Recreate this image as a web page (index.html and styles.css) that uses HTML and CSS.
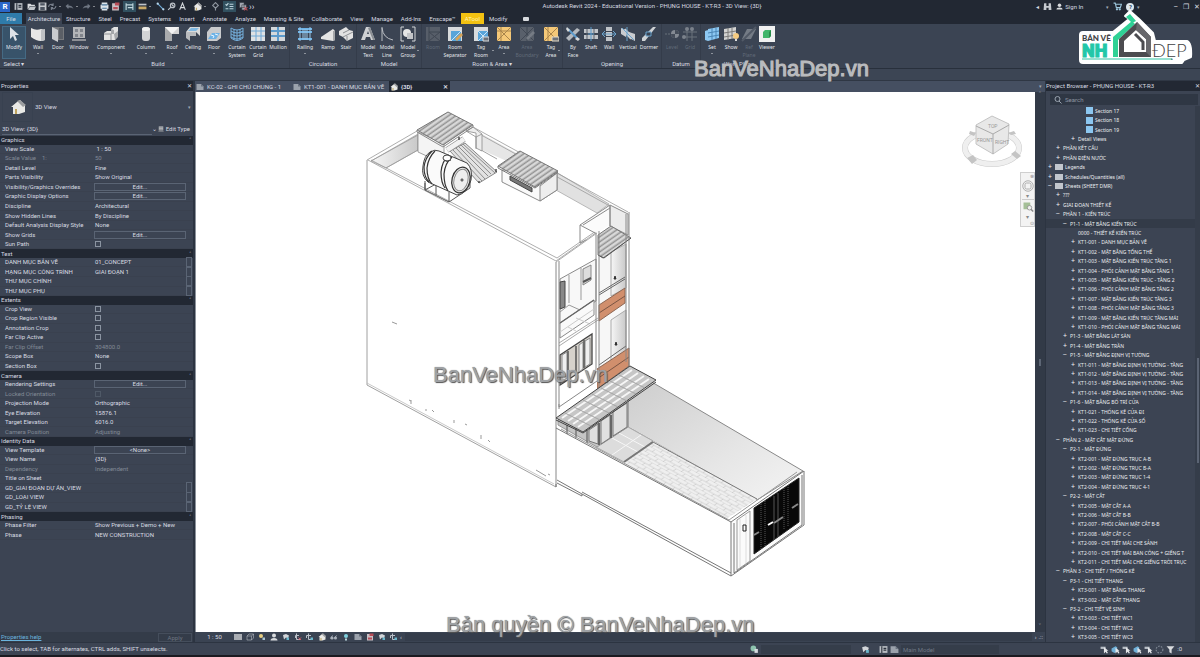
FILE: index.html
```html
<!DOCTYPE html>
<html lang="vi">
<head>
<meta charset="utf-8">
<title>Autodesk Revit 2024 - PHỤNG HOUSE</title>
<link rel="stylesheet" href="styles.css">
</head>
<body>
<svg class="defs" aria-hidden="true">
  <defs>
    <symbol id="arrow" viewBox="0 0 16 16"><path d="M4 1v12l3-3 2 5 2-1-2-5h4z" fill="#dde1e6"/></symbol>
    <symbol id="wall" viewBox="0 0 16 16"><path d="M1 2q5 3 10 1l4 1v10q-6 3-14-3z" fill="#e6e6e6"/><path d="M11 4l4-1v11l-4 1z" fill="#bfc1c4"/></symbol>
    <symbol id="door" viewBox="0 0 16 16"><path d="M2 1h12v13H8z" fill="#77797d"/><path d="M2 1l6 3v12l-6-3z" fill="#c9cbce"/><path d="M9 2h4v11H9z" fill="#5b5f66"/></symbol>
    <symbol id="window" viewBox="0 0 16 16"><path d="M2 1h12v11H2z" fill="#b3b5b8"/><path d="M4 3h3v3H4zM9 3h3v3H9zM4 8h3v3H4zM9 8h3v3H9z" fill="#80848b"/><path d="M1 13h14v2H1z" fill="#8d9096"/></symbol>
    <symbol id="component" viewBox="0 0 16 16"><path d="M1 7l3-2h4V3l3-2h4v9l-3 4H1z" fill="#e3e3e3"/><path d="M8 3v5h3V4zM11 8l4-3v6l-3 3z" fill="#a6a8ab"/><path d="M1 8h7v6" fill="none" stroke="#8f9296"/></symbol>
    <symbol id="column" viewBox="0 0 16 16"><rect x="4" y="1" width="8" height="14" rx="3" fill="#d2d3d5"/><ellipse cx="8" cy="3" rx="4" ry="2" fill="#f0f0f0"/></symbol>
    <symbol id="roof" viewBox="0 0 16 16"><path d="M1 1h14v7H8v7H1z" fill="#d4d4d4"/><path d="M1 1l7 7v7H1z" fill="#a9abad"/><path d="M1 1h14L8 8z" fill="#f3f3f3"/></symbol>
    <symbol id="ceiling" viewBox="0 0 16 16"><path d="M5 1h10v9l-4-4H1z" fill="#d9dadb"/><path d="M6 2h8l-3 3H3z" fill="#7fb8e2"/><path d="M1 6h10v4H5v5l-4-3z" fill="#b8babd"/></symbol>
    <symbol id="floor" viewBox="0 0 16 16"><path d="M5 1h10v11l-4 3H1V6z" fill="#c9cbcd"/><path d="M6 7h8l-4 6H2z" fill="#6fb3e6"/><path d="M5 9l3 1-1 2M9 8l3 1" stroke="#e9f5ff" fill="none"/></symbol>
    <symbol id="csystem" viewBox="0 0 16 16"><path d="M2 2q6 4 12 0v10q-6 5-12 0zM5 3v11M8 4v11M11 3v11M2 5q6 4 12 0M2 8q6 4 12 0M2 11q6 4 12 0" fill="none" stroke="#74aedb"/></symbol>
    <symbol id="cgrid" viewBox="0 0 16 16"><path d="M1 1h14v14H1z" fill="#dfe1e3"/><path d="M6 1v14M11 1v14M1 5h14M1 10h14" stroke="#6ea8d6"/></symbol>
    <symbol id="mullion" viewBox="0 0 16 16"><path d="M1 1h14v14H1z" fill="#d5d8db"/><path d="M8 1v14M1 5h14M1 10h14" stroke="#5c9acb" stroke-width="2"/></symbol>
    <symbol id="railing" viewBox="0 0 16 16"><path d="M1 3h14M1 6h14M1 13h14" stroke="#6db4e8" stroke-width="2"/><path d="M3 1v14M6 3v11M8 3v11M10 3v11M13 1v14" stroke="#9cc9ea"/></symbol>
    <symbol id="ramp" viewBox="0 0 16 16"><path d="M1 11L13 3l2 2v9l-2 1-12-2z" fill="#e4e4e4"/><path d="M13 5l2 0v9l-2 1z" fill="#a5a7aa"/></symbol>
    <symbol id="stair" viewBox="0 0 16 16"><path d="M1 5l7-4 3 3 4 1v7l-6 3-4-4-4-2z" fill="#e2e2e2"/><path d="M5 7l6-3M5 11l6-3 4-2M9 15v-5" stroke="#8c8f93" fill="none"/></symbol>
    <symbol id="mtext" viewBox="0 0 16 16"><path fill-rule="evenodd" d="M1 14L6 1h4l5 13h-4l-1-3H6l-1 3zM7 8h2L8 5z" fill="#cfd1d3"/><path d="M10 1l5 13h-2L8 2z" fill="#898d92"/></symbol>
    <symbol id="mline" viewBox="0 0 16 16"><path d="M3 1v14M3 2q1 10 11 12" fill="none" stroke="#b9bdc3"/></symbol>
    <symbol id="mgroup" viewBox="0 0 16 16"><path d="M4 1H1v14h3M12 1h3v14h-3" fill="none" stroke="#d3d5d8"/><circle cx="7" cy="7" r="4" fill="#e6e6e6"/><path d="M7 7h6v6H7z" fill="#c3c5c8"/></symbol>
    <symbol id="roomx" viewBox="0 0 16 16"><path d="M1 1h14v14H1z" fill="#575e69"/><path d="M4 1v14M4 6h11M4 15L15 6M4 6l11 9" stroke="#3f4652"/></symbol>
    <symbol id="roomsep" viewBox="0 0 16 16"><path d="M1 1h14v14H1z" fill="#d9dbdd"/><path d="M4 5h10v10H4z" fill="#58a4d9"/><path d="M4 15L14 5" stroke="#cde6f7"/><path d="M8 13l6-6 2 2-6 6z" fill="#d6a257"/></symbol>
    <symbol id="tagroom" viewBox="0 0 16 16"><path d="M1 1h14v14H1z" fill="#d9dbdd"/><path d="M5 5h10v10H5z" fill="#58a4d9"/><path d="M5 5l10 10M5 15L15 5" stroke="#cde6f7"/><path d="M10 11h6v4h-6z" fill="#6b7078" stroke="#ddd"/></symbol>
    <symbol id="area" viewBox="0 0 16 16"><path d="M1 1h14v14H1z" fill="#f4c878"/><path d="M1 1l14 14M1 15L15 1M5 1v14M1 5h14" stroke="#a9854c"/></symbol>
    <symbol id="areab" viewBox="0 0 16 16"><path d="M1 1h14v14H1z" fill="#59606b"/><path d="M1 1l14 14M1 15L15 1M8 1v14" stroke="#414854"/><path d="M7 12l7-7 2 2-7 7z" fill="#757b84"/></symbol>
    <symbol id="tagarea" viewBox="0 0 16 16"><path d="M1 1h14v14H1z" fill="#f4c878"/><path d="M1 1l14 14M1 15L15 1M5 1v14" stroke="#a9854c"/><path d="M9 11h7v4H9z" fill="#6b7078" stroke="#e6dcc8"/></symbol>
    <symbol id="byface" viewBox="0 0 16 16"><path d="M1 12L12 2l3 2L4 15z" fill="#b4b9bf"/><path d="M3 3l10 10" stroke="#5d9bcc" stroke-width="2"/><path d="M2 1l3 3-2 2-2-3zM12 11l3 2-2 2-3-2z" fill="#d8dadc"/></symbol>
    <symbol id="shaft" viewBox="0 0 16 16"><path d="M1 3h14v4H1zM1 9h14v4H1z" fill="#c0c4c9"/><path d="M4 3v10M11 3v10" stroke="#59616d"/><path d="M8 1v14M5 8h6" stroke="#5d9bcc"/></symbol>
    <symbol id="wallo" viewBox="0 0 16 16"><path d="M5 1h6v4H5zM5 11h6v4H5zM5 6h6v4H5z" fill="#c0c4c9"/><path d="M1 8h14M4 5L1 8l3 3M12 5l3 3-3 3" fill="none" stroke="#6ba3cd"/></symbol>
    <symbol id="vertical" viewBox="0 0 16 16"><path d="M1 2l5 2v7L1 8zM9 6l6 2v7l-6-3z" fill="#c9ccd0"/><path d="M4 4l8 8" stroke="#c9ccd0" stroke-width="4"/><path d="M2 2l12 12M7 1v14" stroke="#6ba3cd"/></symbol>
    <symbol id="dormer" viewBox="0 0 16 16"><path d="M1 12L12 1h3L4 15H1z" fill="#cfd2d5"/><path d="M5 6v4h5V6z" fill="#3b4453" stroke="#6ba3cd"/></symbol>
    <symbol id="level" viewBox="0 0 16 16"><path d="M1 8h8" stroke="#69707b" stroke-dasharray="2 1"/><circle cx="11" cy="8" r="4" fill="#848a93"/><path d="M11 4v4h4a4 4 0 0 0-4-4M11 8v4a4 4 0 0 1-4-4z" fill="#444c59"/></symbol>
    <symbol id="grid" viewBox="0 0 16 16"><path d="M5 3v12M10 3v12M1 6h14M1 11h14" stroke="#6b727d"/><circle cx="5" cy="3" r="2" fill="#7a818b"/><circle cx="10" cy="3" r="2" fill="#7a818b"/><circle cx="2" cy="11" r="2" fill="#7a818b"/></symbol>
    <symbol id="set" viewBox="0 0 16 16"><path d="M1 5l3-1v11l-3-1zM4 3l11-2v11L4 15z" fill="#8dc8f2"/><path d="M8 2v12M12 2v11M4 7l11-2M4 11l11-2" stroke="#4b86b5"/></symbol>
    <symbol id="show" viewBox="0 0 16 16"><path d="M1 3l12-2v11L1 14z" fill="#d3d3d1"/><path d="M5 2v12M9 2v11M1 7l12-2M1 11l12-2" stroke="#7b7a78"/><circle cx="13" cy="10" r="3" fill="#f5cb81"/><path d="M12 13h2v2h-2z" fill="#ddd"/></symbol>
    <symbol id="refplane" viewBox="0 0 16 16"><path d="M1 13L6 3h9l-5 10z" fill="#747b85"/><path d="M1 15L15 1" stroke="#515966" stroke-width="2"/></symbol>
    <symbol id="viewer" viewBox="0 0 16 16"><path d="M0 0h16v16H0z" fill="#f1f1f1"/><path d="M4 6l2-2h6v6l-2 2H4z" fill="#41b66b"/><path d="M10 6l2-2v6l-2 2z" fill="#2a8b4b"/></symbol>
    <symbol id="house" viewBox="0 0 16 16"><path d="M1 8l6-5 3-2 5 5v7l-6 2H3V8z" fill="#e9e9e6"/><path d="M7 2l3-1 6 5-3 2z" fill="#9b9d9f"/><path d="M5 10h2v5H5z" fill="#bfa35d"/></symbol>
    <symbol id="sheet" viewBox="0 0 16 16"><path d="M1 2h9l5 5v7H1z" fill="#9ba2ac"/><path d="M10 2v5h5" fill="#68717e"/></symbol>
    <symbol id="folder" viewBox="0 0 16 16"><path d="M1 3h5l2 2h6v2H5l-3 6H1z" fill="#d9dbde"/><path d="M5 8h11l-3 6H2z" fill="#c1c5ca"/></symbol>
    <symbol id="save" viewBox="0 0 16 16"><path d="M1 1h14v14H1z" fill="#c4c8cd"/><path d="M4 2h8v4H4zM4 9h8v5H4z" fill="#4c5461"/></symbol>
    <symbol id="doc" viewBox="0 0 16 16"><path d="M1 2h14v12H1z" fill="#b9bdc3"/><path d="M5 2v12M8 6h5M8 9h5" stroke="#2b323d" stroke-width="2"/></symbol>
    <symbol id="sync" viewBox="0 0 16 16"><path d="M1 9a5 5 0 0 1 8-4M14 7a5 5 0 0 1-8 4M9 2v4H6M6 14v-4h3" fill="none" stroke="#767e8a" stroke-width="2"/></symbol>
    <symbol id="undo" viewBox="0 0 16 16"><path d="M1 7l5-4v3q7 0 9 6-4-3-9-2v3z" fill="#6f7783"/></symbol>
    <symbol id="redo" viewBox="0 0 16 16"><path d="M15 7l-5-4v3q-7 0-9 6 4-3 9-2v3z" fill="#6f7783"/></symbol>
    <symbol id="print" viewBox="0 0 16 16"><path d="M3 1h10v4h2v7h-2v3H3v-3H1V5h2z" fill="#dce4ea"/><path d="M3 5h10M4 11h8" stroke="#48759b" stroke-width="2"/></symbol>
    <symbol id="pdf" viewBox="0 0 16 16"><path d="M2 2h9l3 3v10H2z" fill="#c8bfc4"/><path d="M7 1h8v5H7zM4 9h8v4H4z" fill="#b84d58"/></symbol>
    <symbol id="dim" viewBox="0 0 16 16"><path d="M2 2v12M14 2v12M2 5h12M5 10h8" stroke="#bfd6dd" stroke-width="2"/></symbol>
    <symbol id="ruler" viewBox="0 0 16 16"><path d="M1 3h14v3H1z" fill="#bfc3c8"/><path d="M1 8h14v5H1z" fill="#c9a868"/></symbol>
    <symbol id="dim2" viewBox="0 0 16 16"><path d="M3 3l10 10" stroke="#6eabd9" stroke-width="2"/><circle cx="3" cy="3" r="2" fill="#b9d8ee"/><circle cx="13" cy="13" r="2" fill="#b9d8ee"/></symbol>
    <symbol id="tag" viewBox="0 0 16 16"><circle cx="10" cy="6" r="4" fill="none" stroke="#bcc1c8" stroke-width="2"/><path d="M7 9l-5 5M8 4l4 4" stroke="#bcc1c8" stroke-width="2"/></symbol>
    <symbol id="letter" viewBox="0 0 16 16"><path d="M3 14L8 2l5 12M5 10h6" fill="none" stroke="#d6d9dd" stroke-width="2"/></symbol>
    <symbol id="circle" viewBox="0 0 16 16"><path d="M8 1l5 5-5 5-5-5zM8 11v4" fill="none" stroke="#8f96a0" stroke-width="2"/></symbol>
    <symbol id="ring" viewBox="0 0 16 16"><circle cx="8" cy="8" r="6" fill="none" stroke="#7d8692" stroke-width="2" stroke-dasharray="3 2"/></symbol>
    <symbol id="list" viewBox="0 0 16 16"><path d="M1 4l2 2 3-4M8 4h7M8 8h7M1 12h5M8 12h7" fill="none" stroke="#bcd2dc" stroke-width="2"/></symbol>
    <symbol id="closew" viewBox="0 0 16 16"><path d="M1 1h8v9H1zM5 5h8v9H5z" fill="#a9afb8" stroke="#2a303b"/><path d="M9 9l6 6M15 9l-6 6" stroke="#b34c55" stroke-width="2"/></symbol>
    <symbol id="person" viewBox="0 0 16 16"><circle cx="8" cy="5" r="4" fill="#d9dbde"/><path d="M1 15q0-5 7-5t7 5z" fill="#d9dbde"/></symbol>
    <symbol id="binoc" viewBox="0 0 16 16"><path d="M2 2h4v5h4V2h4l1 12h-5v-4H6v4H1z" fill="#c6cad0"/></symbol>
    <symbol id="cart" viewBox="0 0 16 16"><path d="M1 2h3l2 8h7l2-6H5" fill="none" stroke="#9cc6dc" stroke-width="2"/><circle cx="7" cy="13" r="2" fill="#9cc6dc"/><circle cx="12" cy="13" r="2" fill="#9cc6dc"/></symbol>
    <symbol id="cube" viewBox="0 0 16 16"><path d="M2 6l4-4h9v8l-4 4H2zM2 6h9v8M11 6l4-4" fill="none" stroke="#c8ccd2" stroke-width="1"/></symbol>
    <symbol id="vc" viewBox="0 0 16 16"><path d="M2 4l6-2 6 3-2 6-4-2-4 4z" fill="#d2d5d9"/><path d="M9 9h5v5H9z" fill="#69b7cc"/></symbol>
    <symbol id="vcx" viewBox="0 0 16 16"><path d="M3 10V5h7M5 1v12h8" fill="none" stroke="#bac0c8" stroke-width="2"/><path d="M9 9l5 5M14 9l-5 5" stroke="#cf5d68" stroke-width="2"/></symbol>
    <symbol id="vcrop" viewBox="0 0 16 16"><path d="M1 10V5h9M5 1v12h8" fill="none" stroke="#bac0c8" stroke-width="2"/><path d="M9 9h5v5H9z" fill="#69b7cc"/></symbol>
    <symbol id="glasses" viewBox="0 0 16 16"><path d="M1 11l4-6M8 11l5-6" stroke="#a9b0ba" stroke-width="2"/><circle cx="4" cy="10" r="3" fill="#a9b0ba"/><circle cx="11" cy="10" r="3" fill="#a9b0ba"/></symbol>
    <symbol id="sun" viewBox="0 0 16 16"><circle cx="6" cy="6" r="4" fill="#e8cf82"/><path d="M9 9h5v5H9z" fill="#aac5d2"/></symbol>
    <symbol id="pick" viewBox="0 0 16 16"><path d="M1 3h9v4H1z" fill="#b8bec6"/><path d="M7 4v11l3-3 2 3 2-1-2-4h3z" fill="#e5e7ea"/></symbol>
    <symbol id="pickb" viewBox="0 0 16 16"><path d="M1 6l7-4 3 2v7l-5 3-5-3z" fill="#6fb0d8"/><path d="M8 5v10l3-3 2 3 2-1-2-4h2z" fill="#e5e7ea"/></symbol>
    <symbol id="filter" viewBox="0 0 16 16"><path d="M1 2h14l-5 6v7l-4-2V8z" fill="#d9dbde"/></symbol>
    <symbol id="bulb" viewBox="0 0 16 16"><circle cx="8" cy="6" r="4" fill="#7fd0dd"/><path d="M6 11h4v4H6z" fill="#b9d5dc"/></symbol>
    <symbol id="sets" viewBox="0 0 16 16"><circle cx="6" cy="6" r="5" fill="#8ec3ae"/><path d="M8 7h6v7H8z" fill="#d6dadf"/></symbol>
    <symbol id="lens" viewBox="0 0 16 16"><circle cx="7" cy="6" r="5" fill="none" stroke="#9aa3af" stroke-width="2"/><path d="M10 10l5 5" stroke="#9aa3af" stroke-width="2"/></symbol>
  </defs>
</svg>

<div class="app">
  <header class="titlebar">
    <nav class="quick">
      <button class="rlogo" aria-label="Revit">R</button>
      <button aria-label="Home" class="q"><svg><use href="#doc"/></svg></button>
      <button aria-label="Open" class="q"><svg><use href="#folder"/></svg></button>
      <button aria-label="Save" class="q"><svg><use href="#save"/></svg></button>
      <button aria-label="Sync" class="q dd"><svg><use href="#sync"/></svg></button>
      <button aria-label="Undo" class="q dd"><svg><use href="#undo"/></svg></button>
      <button aria-label="Redo" class="q dd"><svg><use href="#redo"/></svg></button>
      <button aria-label="Print" class="q"><svg><use href="#print"/></svg></button>
      <button aria-label="Export" class="q"><svg><use href="#pdf"/></svg></button>
      <button aria-label="Thin lines" class="q on"><svg><use href="#dim"/></svg></button>
      <button aria-label="Measure" class="q dd"><svg><use href="#ruler"/></svg></button>
      <button aria-label="Dimension" class="q"><svg><use href="#dim2"/></svg></button>
      <button aria-label="Tag" class="q"><svg><use href="#tag"/></svg></button>
      <button aria-label="Text" class="q gap"><svg><use href="#letter"/></svg></button>
      <button aria-label="3D view" class="q dd"><svg><use href="#house"/></svg></button>
      <button aria-label="Section" class="q"><svg><use href="#circle"/></svg></button>
      <button aria-label="Line weights" class="q on"><svg><use href="#list"/></svg></button>
      <button aria-label="Close inactive" class="q"><svg><use href="#closew"/></svg></button>
      <button aria-label="More" class="more">››</button>
    </nav>
    <h1>Autodesk Revit 2024 - Educational Version - PHỤNG HOUSE - KT-R3 - 3D View: {3D}</h1>
    <div class="account">
      <span class="caret-l">◂</span>
      <button aria-label="Search" class="q"><svg><use href="#binoc"/></svg></button>
      <button class="signin"><svg><use href="#person"/></svg>Sign In</button>
      <span class="caret-d">▾</span>
      <button aria-label="Store" class="q"><svg><use href="#cart"/></svg></button>
      <button class="help" aria-label="Help">?</button>
      <span class="caret-d">▾</span>
      <div class="winbtns"><button aria-label="Minimize">–</button><button aria-label="Restore">❐</button><button aria-label="Close">✕</button></div>
    </div>
  </header>

  <nav class="tabs">
    <button class="file">File</button><button class="active">Architecture</button><button>Structure</button><button>Steel</button><button>Precast</button><button>Systems</button><button>Insert</button><button>Annotate</button><button>Analyze</button><button>Massing &amp; Site</button><button>Collaborate</button><button>View</button><button>Manage</button><button>Add-Ins</button><button>Enscape™</button><button class="atool">ATool</button><button>Modify</button><button class="rec" aria-label="Display"><i></i></button>
  </nav>

  <section class="ribbon">
    <div class="panel select"><div class="tools"><button class="tool w24 pressed"><svg><use href="#arrow"/></svg>Modify</button></div><p>Select ▾</p></div>
    <div class="panel"><div class="tools">
      <button class="tool w20 dn"><svg><use href="#wall"/></svg>Wall</button>
      <button class="tool w20"><svg><use href="#door"/></svg>Door</button>
      <button class="tool w22"><svg><use href="#window"/></svg>Window</button>
      <button class="tool w42 dn"><svg><use href="#component"/></svg>Component</button>
      <button class="tool w28 dn"><svg><use href="#column"/></svg>Column</button>
      <button class="tool w24 dn"><svg><use href="#roof"/></svg>Roof</button>
      <button class="tool w18"><svg><use href="#ceiling"/></svg>Ceiling</button>
      <button class="tool w24 dn"><svg><use href="#floor"/></svg>Floor</button>
      <button class="tool w22"><svg><use href="#csystem"/></svg>Curtain<br>System</button>
      <button class="tool w20"><svg><use href="#cgrid"/></svg>Curtain<br>Grid</button>
      <button class="tool w20"><svg><use href="#mullion"/></svg>Mullion</button>
    </div><p>Build</p></div>
    <div class="panel"><div class="tools">
      <button class="tool w28 dn"><svg><use href="#railing"/></svg>Railing</button>
      <button class="tool w18"><svg><use href="#ramp"/></svg>Ramp</button>
      <button class="tool w18"><svg><use href="#stair"/></svg>Stair</button>
    </div><p>Circulation</p></div>
    <div class="panel"><div class="tools">
      <button class="tool w20"><svg><use href="#mtext"/></svg>Model<br>Text</button>
      <button class="tool w18"><svg><use href="#mline"/></svg>Model<br>Line</button>
      <button class="tool w24 side"><svg><use href="#mgroup"/></svg>Model<br>Group</button>
    </div><p>Model</p></div>
    <div class="panel"><div class="tools">
      <button class="tool w20" disabled><svg><use href="#roomx"/></svg>Room</button>
      <button class="tool w24"><svg><use href="#roomsep"/></svg>Room<br>Separator</button>
      <button class="tool w28 side"><svg><use href="#tagroom"/></svg>Tag<br>Room</button>
      <button class="tool w18 dn"><svg><use href="#area"/></svg>Area</button>
      <button class="tool w28" disabled><svg><use href="#areab"/></svg>Area<br>Boundary</button>
      <button class="tool w20 side"><svg><use href="#tagarea"/></svg>Tag<br>Area</button>
    </div><p>Room &amp; Area ▾</p></div>
    <div class="panel"><div class="tools">
      <button class="tool w18"><svg><use href="#byface"/></svg>By<br>Face</button>
      <button class="tool w18"><svg><use href="#shaft"/></svg>Shaft</button>
      <button class="tool w18"><svg><use href="#wallo"/></svg>Wall</button>
      <button class="tool w20"><svg><use href="#vertical"/></svg>Vertical</button>
      <button class="tool w22"><svg><use href="#dormer"/></svg>Dormer</button>
    </div><p>Opening</p></div>
    <div class="panel"><div class="tools">
      <button class="tool w18" disabled><svg><use href="#level"/></svg>Level</button>
      <button class="tool w18" disabled><svg><use href="#grid"/></svg>Grid</button>
    </div><p>Datum</p></div>
    <div class="panel last"><div class="tools">
      <button class="tool w20 dn"><svg><use href="#set"/></svg>Set</button>
      <button class="tool w18"><svg><use href="#show"/></svg>Show</button>
      <button class="tool w18" disabled><svg><use href="#refplane"/></svg>Ref<br>Plane</button>
      <button class="tool w18"><svg><use href="#viewer"/></svg>Viewer</button>
    </div><p>Work Plane</p></div>
  </section>
  <div class="optionsbar"></div>

  <main class="work">
    <aside class="props">
      <div class="ptitle"><h2>Properties</h2><button aria-label="Close properties">✕</button></div>
      <div class="ptype"><span class="thumb"><svg><use href="#house"/></svg></span><span class="tname">3D View</span><span class="caret-d">▾</span></div>
      <div class="pinst">
        <select aria-label="Instance"><option>3D View: {3D}</option></select><span class="chev">⌄</span>
        <button><svg><use href="#window"/></svg>Edit Type</button>
      </div>
      <table class="plist"><tbody>
        <tr class="sec"><th colspan="2">Graphics</th></tr>
        <tr><th>View Scale</th><td>&nbsp;1 : 50</td></tr>
        <tr class="off"><th>Scale Value &nbsp;&nbsp; 1:</th><td>50</td></tr>
        <tr><th>Detail Level</th><td>Fine</td></tr>
        <tr><th>Parts Visibility</th><td>Show Original</td></tr>
        <tr><th>Visibility/Graphics Overrides</th><td><button>Edit...</button></td></tr>
        <tr><th>Graphic Display Options</th><td><button>Edit...</button></td></tr>
        <tr><th>Discipline</th><td>Architectural</td></tr>
        <tr><th>Show Hidden Lines</th><td>By Discipline</td></tr>
        <tr><th>Default Analysis Display Style</th><td>None</td></tr>
        <tr><th>Show Grids</th><td><button>Edit...</button></td></tr>
        <tr><th><label for="c1">Sun Path</label></th><td><input id="c1" type="checkbox"></td></tr>
        <tr class="sec"><th colspan="2">Text</th></tr>
        <tr class="pk"><th>DANH MỤC BẢN VẼ</th><td>01_CONCEPT</td></tr>
        <tr class="pk"><th>HẠNG MỤC CÔNG TRÌNH</th><td>GIAI ĐOẠN 1</td></tr>
        <tr class="pk"><th>THƯ MỤC CHÍNH</th><td></td></tr>
        <tr class="pk"><th>THƯ MỤC PHỤ</th><td></td></tr>
        <tr class="sec"><th colspan="2">Extents</th></tr>
        <tr><th><label for="c2">Crop View</label></th><td><input id="c2" type="checkbox"></td></tr>
        <tr><th><label for="c3">Crop Region Visible</label></th><td><input id="c3" type="checkbox"></td></tr>
        <tr><th><label for="c4">Annotation Crop</label></th><td><input id="c4" type="checkbox"></td></tr>
        <tr><th><label for="c5">Far Clip Active</label></th><td><input id="c5" type="checkbox"></td></tr>
        <tr class="off"><th>Far Clip Offset</th><td>304800.0</td></tr>
        <tr><th>Scope Box</th><td>None</td></tr>
        <tr><th><label for="c6">Section Box</label></th><td><input id="c6" type="checkbox"></td></tr>
        <tr class="sec"><th colspan="2">Camera</th></tr>
        <tr><th>Rendering Settings</th><td><button>Edit...</button></td></tr>
        <tr class="off"><th><label for="c7">Locked Orientation</label></th><td><input id="c7" type="checkbox" disabled></td></tr>
        <tr><th>Projection Mode</th><td>Orthographic</td></tr>
        <tr><th>Eye Elevation</th><td>15876.1</td></tr>
        <tr><th>Target Elevation</th><td>6016.0</td></tr>
        <tr class="off"><th>Camera Position</th><td>Adjusting</td></tr>
        <tr class="sec"><th colspan="2">Identity Data</th></tr>
        <tr><th>View Template</th><td><button>&lt;None&gt;</button></td></tr>
        <tr><th>View Name</th><td>{3D}</td></tr>
        <tr class="off"><th>Dependency</th><td>Independent</td></tr>
        <tr><th>Title on Sheet</th><td></td></tr>
        <tr class="pk"><th>GD_GIAI ĐOẠN DỰ ÁN_VIEW</th><td></td></tr>
        <tr class="pk"><th>GD_LOẠI VIEW</th><td></td></tr>
        <tr class="pk"><th>GD_TỶ LỆ VIEW</th><td></td></tr>
        <tr class="sec"><th colspan="2">Phasing</th></tr>
        <tr><th>Phase Filter</th><td>Show Previous + Demo + New</td></tr>
        <tr><th>Phase</th><td>NEW CONSTRUCTION</td></tr>
      </tbody></table>
      <div class="pspace"></div>
      <div class="pfoot"><a href="#help">Properties help</a><button disabled>Apply</button></div>
    </aside>

    <section class="center">
      <nav class="doctabs">
        <button><svg><use href="#sheet"/></svg>KC-02 - GHI CHÚ CHUNG - 1</button>
        <button><svg><use href="#sheet"/></svg>KT1-001 - DANH MỤC BẢN VẼ</button>
        <button class="active"><svg><use href="#house"/></svg>{3D}<span>✕</span></button>
        <span class="caret-d">▾</span>
      </nav>
      <div class="viewrow">
        <div class="canvas">
          <svg class="model" viewBox="196 92 839 540" fill="none" stroke="#8a8a8a" stroke-width="1">
            <defs>
              <pattern id="tiles" width="9" height="6" patternUnits="userSpaceOnUse" patternTransform="matrix(1 .56 1 -.7 628 427)"><path d="M0 0h9M0 3h9M2 0v3M6 3v3" stroke="#c2c2c2" stroke-width=".5"/></pattern>
              <pattern id="ribs" width="4" height="3" patternUnits="userSpaceOnUse" patternTransform="matrix(1 .56 1 -.7 0 0)"><path d="M0 0h4v3H0z" fill="#c6c6c6" stroke="none"/><path d="M1 0v3" stroke="#777" stroke-width=".7"/><path d="M3 0v3" stroke="#e2e2e2" stroke-width="1"/></pattern>
              <linearGradient id="yard" x1="0" y1="0" x2="1" y2="1"><stop offset="0" stop-color="#cdcdcd"/><stop offset=".6" stop-color="#e6e6e6"/><stop offset="1" stop-color="#f4f4f4"/></linearGradient>
              <linearGradient id="shade" x1="0" y1="0" x2="1" y2="0"><stop offset="0" stop-color="#f6f6f6"/><stop offset="1" stop-color="#c9c9c9"/></linearGradient>
            </defs>
            <!-- parapet and roof deck -->
            <g stroke-width=".8">
              <path d="M371 161l47-27v16l-32 18z" fill="url(#shade)" stroke="#aaa"/>
              <path d="M482 134l38 21v12l-38-17z" fill="#e6e6e6" stroke="none"/>
              <path d="M556 172l53 32-12 9-41-23z" fill="#e1e1e1" stroke="#aaa"/>
              <path d="M481 150l16 9M481 134v17"/>
              <path d="M367 160l50-29M371 161l47-26M473 127l155 85M474 131l152 84M418 132v18l19 10M386 168l32-18M368 160l188 101 41-29M371 160l186 98 39-27" stroke="#999"/>
              <path d="M367 160v225l189 102" stroke="#888"/><path d="M367 383l187 101" stroke="#bbb"/>
              <path d="M418 132v20l26 12V144z" fill="#f4f4f4"/>
              <path d="M466 131l7-4 9 7v17l-6-3v-15z" fill="#ededed"/><path d="M466 131l10 6 6-3M476 137v12"/>
            </g>
            <path d="M417 130l31-18 25 13-30 20z" fill="url(#ribs)" stroke="#777"/><path d="M417 130v2l26 15 30-20v-2" stroke="#888"/>
            <!-- solar heater -->
            <path d="M450 151l15-8 32 29-18 11z" fill="#e2e2e2" stroke="#888"/><path d="M453 150l29 31M456 148l29 31M459 147l29 29M461 145l30 29M463 144l32 29" stroke="#777" stroke-width=".8"/><path d="M447 150l17-11" stroke="#888" stroke-width="6"/><path d="M447 150l17-11" stroke="#f2f2f2" stroke-width="5"/><path d="M479 183v-2M496 172v-3M459 137v3" stroke="#444" stroke-width="1.4"/>
            <!-- water tank -->
            <path d="M425 181v9l11-6v-4M436 185v10M449 192v10l21-14v-6M425 190l24 12M425 190v-7" stroke="#555"/>
            <path d="M430 152q5-3 9-1l28 12q6 6 4 17-4 14-14 15l-29-13q-7-6-5-16 1-10 7-14z" fill="#fafafa" stroke="#444"/>
            <path d="M432 151q-7 7-8 16 0 10 5 15M435 151q-7 7-8 17 0 11 5 16M449 155q-7 6-8 17 0 11 4 16M452 157q-7 6-8 17 0 11 4 17" stroke="#333" stroke-width="1.2"/>
            <ellipse cx="461" cy="180" rx="9" ry="13" transform="rotate(14 461 180)" fill="#eee" stroke="#333" stroke-width="1.3"/><ellipse cx="461" cy="180" rx="7" ry="11" transform="rotate(14 461 180)" stroke="#888"/><circle cx="462" cy="180" r="1.2" fill="#222"/>
            <ellipse cx="447" cy="158" rx="4" ry="3" fill="#fff" stroke="#444"/><path d="M444 160q3 3 7 0" stroke="#444"/>
            <!-- skylight box -->
            <path d="M502 170v12l38 19 17-11v-18z" fill="#fafafa"/><path d="M540 186v15l17-11v-17z" fill="#eee"/><path d="M510 176l22 12v4l-22-12z" fill="#777" stroke="#444"/>
            <path d="M498 166l22-15 38 20-23 16z" fill="url(#ribs)" stroke="#777"/><path d="M498 166v2l37 20 23-16" stroke="#777"/>
            <!-- stair head -->
            <path d="M580 225l30-20v20l-13 8z" fill="#fbfbfb" stroke="none"/><path d="M610 205l18 9v21l-18-9z" fill="#ececec"/>
            <path d="M580 225l30-20M580 225l17 9M580 225v18l6-3M583 225l27-17M610 206v20"/>
            <!-- right bay -->
            <path d="M599 248l27-12v130l-27 25z" fill="#f7f7f7" stroke="none"/>
            <path d="M611 252l15-8v44l-15 8zM611 320l15-10v46l-15 8z" fill="url(#shade)" stroke="#aaa"/>
            <path d="M598 235l13-9 20 12-28 20-5-3z" fill="url(#ribs)" stroke="#777"/><path d="M598 255l6 3 27-20" stroke="#555"/>
            <path d="M599 293l26-16M599 295l26-16M599 365l27-19" stroke="#666"/>
            <path d="M599 305l26-17v15l-26 18zM597 369l32-21v18l-32 23z" fill="#d18f6d" stroke="#8e6753"/><path d="M599 313l26-17M597 379l32-22" stroke="#7a5544"/>
            <path d="M614 279l1-3 1 3zM615 345l1-3 1 3z" fill="#111" stroke="#333"/>
            <!-- front facade -->
            <path d="M556 262l41-29v158l-41 28z" fill="#fff" stroke="none"/>
            <path d="M560 279l36-20v42l-36 23z" fill="#f8f8f8"/><path d="M560 282l5-1v26l-5 2z" fill="#888" stroke="#444"/><path d="M569 275v28M581 268v32M560 312l9-7 11 5" stroke="#999"/><path d="M583 269l8-4v15l-8 5z" fill="#ddd" stroke="#888"/><path d="M583 282l8-4" stroke="#555" stroke-width="2"/>
            <path d="M560 323l34-23v15l-34 23z" fill="#fafafa"/><path d="M560 323l34-23" stroke="#666" stroke-width="1.4"/><path d="M560 332l34-23M568 327l8 4M576 318l14 6" stroke="#ccc"/><path d="M559 343l39-25M559 346l39-26" stroke="#aaa"/>
            <path d="M560 355l32-21v30l-32 21z" fill="#d6d2cb" stroke="#444" stroke-width="1.3"/><path d="M562 355l5-3v26l-5 3zM579 345l4-3v27l-4 3zM585 341l5-3v26l-5 3z" fill="#efefef" stroke="#888"/><path d="M568 351v29M576 346v29M584 340v28" stroke="#555" stroke-width="1.5"/>
            <path d="M559 407l38-26M559 404v3" stroke="#888"/>
            <path d="M556 262v225M559 261v148M596 233v137M599 231v158M626 214v148M629 212v154" stroke="#888"/><path d="M556 262l41-29" stroke="#aaa"/>
            <!-- yard -->
            <path d="M628 385l22-4 153 90-46 29-129-73z" fill="url(#yard)" stroke="#888"/>
            <path d="M628 427l129 72-31 20-165-91z" fill="#efefef" stroke="none"/>
            <path d="M628 427l129 72-31 20-101-57z" fill="url(#tiles)" stroke="none"/>
            <path d="M628 427l25 14-29 21-28-15z" fill="#dcdcdc" stroke="#aaa"/><path d="M612 438l26 14M619 433l26 14M641 435l-29 20" stroke="#f6f6f6"/><path d="M653 442l-29 20" stroke="#777" stroke-width="2"/><path d="M653 442l104 57" stroke="#777"/>
            <path d="M558 420l70-45v52l-31 20-39-22z" fill="#c5c5c5" stroke="#999"/>
            <path d="M589 430l9-6v20l-9-3zM601 421l9-6v23l-9 6zM613 412l14-9v24l-14 9z" fill="#e0e0e0" stroke="#777"/><path d="M599 423v22M611 415v23" stroke="#666" stroke-width="2"/><path d="M567 425v9M576 428v10M587 430v13" stroke="#777" stroke-width="1.5"/>
            <path d="M556 418l74-52 26 14-73 52z" fill="#c6c6c6" stroke="#444"/>
            <path d="M562 418l70-48M568 421l70-48M573 424l71-48M578 427l71-48" stroke="#f6f6f6" stroke-width="2"/><path d="M565 413l26 13M574 407l26 13M583 400l26 13M592 394l26 13M601 388l26 13M610 381l26 13M619 375l26 13" stroke="#a5a5a5"/><path d="M556 420l27 13 73-51" stroke="#444"/>
            <path d="M557 430l174 93v53L557 484z" fill="#fff" stroke="none"/><path d="M731 523l72-50v52l-72 51z" fill="#fbfbfb" stroke="none"/>
            <path d="M561 429l168 91 68-48" stroke="#999"/>
            <path d="M556 428l175 94 73-51M731 522v54l73-51v-54M734 523v50l68-48v-50M556 487v-3M557 480l25 14M557 483l25 13v-2l149 82M582 492l149 81" stroke="#777"/>
            <path d="M737 520l13-9v50l-13 9z" stroke="#999"/><path d="M740 519v48M746 515v48" stroke="#ddd"/><path d="M743 525h3v6h-3z" stroke="#222"/>
            <path d="M754 508l45-30v44l-45 32z" fill="#080808" stroke="#222"/>
            <path d="M761 504v45M765 501v45M784 488v42M788 485v42" stroke="#555" stroke-dasharray="1 1"/><path d="M774 496v44M778 493v44" stroke="#555"/><path d="M754 535l5-3M774 523l9-6M792 508l6-4" stroke="#888" stroke-width="2"/><path d="M768 525l5-3" stroke="#fff" stroke-width="2"/>
            <!-- stray marks on the side wall -->
            <path d="M392 322l5 2M409 400l2 1M411 400v4M426 409v2M432 410l2 2M454 420v3M465 424l2 1M481 435v4M488 440l2 2M536 470l10 6M548 474l2 1" stroke="#999"/>
            <!-- view cube -->
            <g stroke="#c4c4c4">
              <ellipse cx="992" cy="148" rx="27" ry="16" stroke="#ccc" stroke-width="6"/><ellipse cx="992" cy="148" rx="27" ry="16" stroke="#efefef" stroke-width="5"/>
              <path d="M967 158l6-3 4 5-5 4zM1011 154l6 5 4-3-6-5zM970 131l6 2-2 3-5-2zM1008 133l6-2 2 3-5 1z" fill="#c4c4c4" stroke="none"/>
              <path d="M976 125l16-9 17 8-1 20-15 10-17-10z" fill="#e8e8e8"/><path d="M976 126l17 8 16-9M993 134v20" stroke="#aaa"/>
            </g>
            <g class="cubetext" stroke="none"><text x="988" y="128">TOP</text><text x="977" y="142">FRONT</text><text x="995" y="144">RIGHT</text></g>
          </svg>
          <div class="navbar">
            <button class="tiny" aria-label="Close">⊗</button>
            <button aria-label="Steering wheel"><svg viewBox="0 0 16 16"><circle cx="8" cy="8" r="7" fill="none" stroke="#999"/><rect x="4" y="4" width="8" height="8" rx="2" fill="none" stroke="#999"/></svg></button>
            <span>▾</span>
            <button class="zoom" aria-label="Zoom"><svg viewBox="0 0 16 16"><path d="M2 2h9v9H2z" fill="#a4bf97"/><circle cx="10" cy="9" r="3" fill="#eee" stroke="#888"/><path d="M12 11l3 3" stroke="#888" stroke-width="2"/></svg></button>
            <span>▾</span>
            <button class="tiny end" aria-label="Options">⊙</button>
          </div>
        </div>
        <div class="vscroll"><span>˄</span><i></i><span>˅</span></div>
      </div>
      <div class="viewbar">
        <button class="scale">1 : 50</button>
        <button aria-label="Detail"><i class="blk"></i></button>
        <button aria-label="Style"><svg><use href="#cube"/></svg></button>
        <button aria-label="Sun"><svg><use href="#sun"/></svg></button>
        <button aria-label="Shadows"><svg><use href="#person"/></svg></button>
        <button aria-label="Render"><svg><use href="#vc"/></svg></button>
        <button aria-label="Crop off"><svg><use href="#vcx"/></svg></button>
        <button aria-label="Crop"><svg><use href="#vcrop"/></svg></button>
        <button aria-label="Lock"><svg><use href="#house"/></svg></button>
        <button aria-label="Glasses"><svg><use href="#glasses"/></svg></button>
        <button aria-label="Reveal"><svg><use href="#bulb"/></svg></button>
        <button aria-label="Template"><svg><use href="#sheet"/></svg></button>
        <button aria-label="Analytical"><svg><use href="#pdf"/></svg></button>
        <button aria-label="Highlight"><svg><use href="#vc"/></svg></button>
        <button aria-label="Constraints"><svg><use href="#vcrop"/></svg></button>
        <span>‹</span>
        <div class="hscroll"></div><span>›</span><span class="grip">.::</span>
      </div>
    </section>

    <aside class="browser">
      <div class="ptitle"><h2>Project Browser - PHỤNG HOUSE - KT-R3</h2><button aria-label="Close browser">✕</button></div>
      <label class="search"><svg><use href="#lens"/></svg><input type="text" placeholder="Search" aria-label="Search"></label>
      <div class="treewrap">
      <ul class="tree">
        <li class="l5"><i class="ic blue"></i>Section 17</li>
        <li class="l5"><i class="ic blue"></i>Section 18</li>
        <li class="l5"><i class="ic blue"></i>Section 19</li>
        <li class="l4"><button>+</button>Detail Views</li>
        <li class="l2"><button>+</button>PHẦN KẾT CẤU</li>
        <li class="l2"><button>+</button>PHẦN ĐIỆN NƯỚC</li>
        <li class="l1"><button>+</button><i class="ic"></i>Legends</li>
        <li class="l1"><button>+</button><i class="ic"></i>Schedules/Quantities (all)</li>
        <li class="l1"><button>−</button><i class="ic"></i>Sheets (SHEET DMR)</li>
        <li class="l2"><button>+</button>???</li>
        <li class="l2"><button>+</button>GIAI ĐOẠN THIẾT KẾ</li>
        <li class="l2"><button>−</button>PHẦN 1 - KIẾN TRÚC</li>
        <li class="l3 sel"><button>−</button>P1-1 - MẶT BẰNG KIẾN TRÚC</li>
        <li class="l4 leaf">0000 - THIẾT KẾ KIẾN TRÚC</li>
        <li class="l4"><button>+</button>KT1-001 - DANH MỤC BẢN VẼ</li>
        <li class="l4"><button>+</button>KT1-002 - MẶT BẰNG TỔNG THỂ</li>
        <li class="l4"><button>+</button>KT1-003 - MẶT BẰNG KIẾN TRÚC TẦNG 1</li>
        <li class="l4"><button>+</button>KT1-004 - PHỐI CẢNH MẶT BẰNG TẦNG 1</li>
        <li class="l4"><button>+</button>KT1-005 - MẶT BẰNG KIẾN TRÚC - TẦNG 2</li>
        <li class="l4"><button>+</button>KT1-006 - PHỐI CẢNH MẶT BẰNG TẦNG 2</li>
        <li class="l4"><button>+</button>KT1-007 - MẶT BẰNG KIẾN TRÚC TẦNG 3</li>
        <li class="l4"><button>+</button>KT1-008 - PHỐI CẢNH MẶT BẰNG TẦNG 3</li>
        <li class="l4"><button>+</button>KT1-009 - MẶT BẰNG KIẾN TRÚC TẦNG MÁI</li>
        <li class="l4"><button>+</button>KT1-010 - PHỐI CẢNH MẶT BẰNG TẦNG MÁI</li>
        <li class="l3"><button>+</button>P1-3 - MẶT BẰNG LÁT SÀN</li>
        <li class="l3"><button>+</button>P1-4 - MẶT BẰNG TRẦN</li>
        <li class="l3"><button>−</button>P1-5 - MẶT BẰNG ĐỊNH VỊ TƯỜNG</li>
        <li class="l4"><button>+</button>KT1-011 - MẶT BẰNG ĐỊNH VỊ TƯỜNG - TẦNG</li>
        <li class="l4"><button>+</button>KT1-012 - MẶT BẰNG ĐỊNH VỊ TƯỜNG - TẦNG</li>
        <li class="l4"><button>+</button>KT1-013 - MẶT BẰNG ĐỊNH VỊ TƯỜNG - TẦNG</li>
        <li class="l4"><button>+</button>KT1-014 - MẶT BẰNG ĐỊNH VỊ TƯỜNG - TẦNG</li>
        <li class="l3"><button>−</button>P1-6 - MẶT BẰNG BỐ TRÍ CỬA</li>
        <li class="l4"><button>+</button>KT1-021 - THỐNG KÊ CỬA ĐI</li>
        <li class="l4"><button>+</button>KT1-022 - THỐNG KÊ CỬA SỔ</li>
        <li class="l4"><button>+</button>KT1-023 - CHI TIẾT CỔNG</li>
        <li class="l2"><button>−</button>PHẦN 2 - MẶT CẮT MẶT ĐỨNG</li>
        <li class="l3"><button>−</button>P2-1 - MẶT ĐỨNG</li>
        <li class="l4"><button>+</button>KT2-001 - MẶT ĐỨNG TRỤC A-B</li>
        <li class="l4"><button>+</button>KT2-002 - MẶT ĐỨNG TRỤC B-A</li>
        <li class="l4"><button>+</button>KT2-003 - MẶT ĐỨNG TRỤC 1-4</li>
        <li class="l4"><button>+</button>KT2-004 - MẶT ĐỨNG TRỤC 4-1</li>
        <li class="l3"><button>−</button>P2-2 - MẶT CẮT</li>
        <li class="l4"><button>+</button>KT2-005 - MẶT CẮT A-A</li>
        <li class="l4"><button>+</button>KT2-006 - MẶT CẮT B-B</li>
        <li class="l4"><button>+</button>KT2-007 - PHỐI CẢNH MẶT CẮT B-B</li>
        <li class="l4"><button>+</button>KT2-008 - MẶT CẮT C-C</li>
        <li class="l4"><button>+</button>KT2-009 - CHI TIẾT MÁI CHE SẢNH</li>
        <li class="l4"><button>+</button>KT2-010 - CHI TIẾT MÁI BAN CÔNG + GIẾNG T</li>
        <li class="l4"><button>+</button>KT2-011 - CHI TIẾT MÁI CHE GIẾNG TRỜI TRỤC</li>
        <li class="l2"><button>−</button>PHẦN 3 - CHI TIẾT / THỐNG KÊ</li>
        <li class="l3"><button>−</button>P3-1 - CHI TIẾT THANG</li>
        <li class="l4"><button>+</button>KT3-001 - MẶT BẰNG THANG</li>
        <li class="l4"><button>+</button>KT3-002 - MẶT CẮT THANG</li>
        <li class="l3"><button>−</button>P3-2 - CHI TIẾT VỆ SINH</li>
        <li class="l4"><button>+</button>KT3-003 - CHI TIẾT WC1</li>
        <li class="l4"><button>+</button>KT3-004 - CHI TIẾT WC2</li>
        <li class="l4"><button>+</button>KT3-005 - CHI TIẾT WC3</li>
      </ul>
      <div class="tscroll"><i></i></div>
      </div>
    </aside>
  </main>

  <footer class="status">
    <p>Click to select, TAB for alternates, CTRL adds, SHIFT unselects.</p>
    <div class="ws"><svg><use href="#sets"/></svg><span class="combo"></span></div>
    <div class="opt"><svg><use href="#vc"/></svg><svg><use href="#doc"/></svg><svg><use href="#sheet"/></svg><span class="combo">Main Model</span></div>
    <div class="picks"><svg><use href="#pick"/></svg><svg><use href="#pickb"/></svg><svg><use href="#pick"/></svg><svg><use href="#pickb"/></svg><svg><use href="#pick"/></svg><svg><use href="#ring"/></svg><svg><use href="#filter"/></svg><span>:0</span></div>
  </footer>

  <div class="mark top">BanVeNhaDep.vn</div>
  <div class="mark mid">BanVeNhaDep.vn</div>
  <div class="mark low">Bản quyền © BanVeNhaDep.vn</div>
  <svg class="brand" viewBox="0 0 114 54">
    <path d="M5 22h30L51 9l-4-3 5-5 9 8 14 14 2 8h32q5 2 4 16l-7 3-2 3H5q-3 0-3-3V25q0-3 3-3z" fill="#fff" stroke="#fff" stroke-width="2" stroke-linejoin="round"/>
    <text x="4" y="31" class="b1">BẢN VẼ</text>
    <text x="4" y="47" class="b2">NH</text>
    <path d="M48 7l4-3 6 7-4 2zM35 47V27l19-16 3 3-17 16v17z" fill="#2fd195"/>
    <path d="M41 47V29l18-17 14 15v20zM46 42h22V29L58 20 46 31z" fill="#4c4c50" fill-rule="evenodd"/>
    <path d="M59 12l14 15v20l-5-5V29L58 20z" fill="#68686c"/><path d="M57 24l8 8v8" fill="none" stroke="#4c4c50" stroke-width="3"/>
    <text x="74" y="47" class="b3">ĐẸP</text>
    <path d="M4 49h90" stroke="#2fc3a2" stroke-width="1"/>
  </svg>
</div>
</body>
</html>
```
FILE: styles.css
```css
* { box-sizing: border-box; }

:root {
  --ink: #d8dbe1;
  --dim: #828a96;
  --dark: #222833;
  --panel: #3c4453;
  --ribbon: #3b4453;
  --line: #2c3441;
  --edge: #5a6474;
}

body, h1, h2, p, ul { margin: 0; padding: 0; font-weight: 400; }

body {
  background: #1b1a20;
  color: var(--ink);
  font: 6px/8px Roboto, "Noto Sans", sans-serif;
}

button, input, select {
  font: inherit;
  color: inherit;
  background: none;
  border: 0;
  margin: 0;
  padding: 0;
}

.defs { position: absolute; width: 0; height: 0; }

.app {
  position: relative;
  display: flex;
  flex-direction: column;
  height: 100vh;
  padding-bottom: 2px;
  overflow: hidden;
  background: #1b1a20;
}

/* title bar */
.titlebar {
  display: grid;
  grid-template-columns: 1fr auto 1fr;
  height: 13px;
  background: var(--dark);
  white-space: nowrap;
}
.titlebar h1 { font-size: 6px; line-height: 11px; padding-left: 104px; }
.quick { display: flex; align-items: center; }
.quick svg, .account svg { display: block; width: 9px; height: 9px; }
.q { width: 11px; flex: none; display: flex; justify-content: center; }
.rlogo {
  width: 10px; height: 10px; margin-right: 3px;
  background: #2a66c8; color: #fff; font-weight: 700; font-size: 8px;
}
.rlogo + .q { margin-right: 2px; }
.q.dd { width: 17px; justify-content: flex-start; position: relative; }
.q.dd::after, .tool.dn::after, .tool.side::after {
  content: ""; border: 1px solid transparent; border-top-color: #dfe2e6; border-bottom: 0;
}
.q.dd::after { margin: 4px 0 0 2px; }
.q.on { width: 13px; height: 11px; align-items: center; background: #31505f; margin: 0 2px; }
.q.gap { margin-right: 5px; }
.more { font-size: 9px; }
.account { display: flex; align-items: center; justify-content: flex-end; gap: 3px; }
.signin { display: flex; align-items: center; gap: 2px; margin-right: 20px; }
.signin svg { width: 7px; height: 7px; }
.help { width: 8px; height: 8px; border-radius: 50%; background: #dfe8ee; color: #28405c; font-weight: 700; line-height: 8px; }
.winbtns { display: flex; gap: 5px; margin-left: 30px; font-size: 7px; }

/* ribbon tabs */
.tabs {
  display: flex;
  height: 11px;
  background: var(--dark);
  white-space: nowrap;
}
.tabs button { padding: 0 4px; line-height: 11px; }
.tabs .file { width: 22px; background: #2f7ba9; margin-right: 4px; }
.tabs .active { width: 36px; background: var(--ribbon); padding: 0; }
.tabs .atool { background: #f2c111; color: #fff2b5; margin: 0 1px; }
.tabs .rec { margin-left: 8px; }
.rec i { display: block; width: 6px; height: 4px; border-radius: 1px; background: #d8dbdf; }

/* ribbon */
.ribbon {
  display: flex;
  height: 45px;
  background: var(--ribbon);
  border-bottom: 1px solid #28303c;
}
.panel {
  display: flex;
  flex-direction: column;
  justify-content: space-between;
  padding: 2px 1px 0;
  border-right: 1px solid #343c4a;
}
.panel.last { border: 0; }
.panel.select { padding-left: 2px; border: 0; }
.panel p { text-align: center; }
.tools { display: flex; }
.tool {
  display: flex;
  flex-direction: column;
  align-items: center;
  height: 33px;
  font: 5px/8px "Noto Sans", sans-serif;
  color: #e6e8ec;
  text-align: center;
  white-space: nowrap;
  position: relative;
}
.tool svg { width: 16px; height: 16px; margin-bottom: 1px; flex: none; }
.tool:disabled { color: #616b79; }
.pressed { background: #38536a; outline: 1px solid #456a84; outline-offset: -1px; }
.tool.dn::after { margin-top: 2px; }
.tool.side::after { position: absolute; right: 1px; bottom: 8px; }
.w18 { width: 18px; }
.w20 { width: 20px; }
.w22 { width: 22px; }
.w24 { width: 24px; }
.w28 { width: 28px; }
.w42 { width: 42px; }
.optionsbar { height: 12px; background: #3c4554; border-bottom: 1px solid #2f3744; }

/* work area */
.work { flex: 1; min-height: 0; display: flex; }
.ptitle {
  display: flex;
  justify-content: space-between;
  height: 10px;
  padding: 0 1px;
  line-height: 10px;
  background: var(--dark);
}
.ptitle h2 { font-size: 6px; white-space: nowrap; }

.props {
  width: 195px;
  flex: none;
  display: flex;
  flex-direction: column;
  background: var(--panel);
  border-right: 2px solid var(--line);
  white-space: nowrap;
}
.ptype { display: flex; align-items: center; height: 32px; padding: 0 2px; }
.thumb { width: 31px; height: 30px; border: 1px solid #384150; display: grid; place-items: center; }
.thumb svg { width: 16px; height: 16px; }
.tname { flex: 1; padding-left: 2px; }
.caret-d { color: #a2a9b3; font-size: 5px; }
.pinst { display: flex; align-items: center; height: 12px; margin-bottom: 1px; padding: 0 3px 0 2px; }
.pinst select { flex: 1; appearance: none; height: 11px; border-bottom: 1px solid var(--edge); }
.chev { width: 6px; }
.pinst button { display: flex; align-items: center; gap: 2px; }
.pinst svg { width: 6px; height: 6px; }

.plist { flex: 44; min-height: 0; display: flex; flex-direction: column; }
.plist tbody { display: contents; }
.plist tr { flex: 1; min-height: 0; display: flex; align-items: center; border-bottom: 1px solid #3a414f; padding: 0 6px 0 5px; }
.plist th { width: 89px; text-align: left; font-weight: 400; padding: 0; }
.plist td { flex: 1; height: 100%; display: flex; align-items: center; padding: 0 0 0 1px; }
.plist .sec { background: var(--dark); padding: 0 2px 0 1px; border: 0; }
.plist .sec th { flex: 1; }
.plist .sec::after { content: "˄"; font-size: 5px; }
.plist .off { color: var(--dim); }
.plist td button { width: 100%; height: 8px; line-height: 6px; border: 1px solid var(--edge); margin-left: -1px; }
.plist .pk { padding-right: 1px; }
.plist .pk::after { content: ""; width: 4px; height: 9px; border: 1px solid var(--edge); }
.plist input { appearance: none; width: 6px; height: 6px; border: 1px solid #8b94a1; }
.plist input:disabled { border-color: #4f5967; }
.pspace { flex: 10; }
.pfoot { display: flex; justify-content: space-between; align-items: center; height: 10px; padding: 0 1px; background: #343c49; }
.pfoot a { color: #6bb4de; }
.pfoot button { width: 34px; height: 9px; line-height: 7px; border: 1px solid #454e5c; color: #6d7582; }

.center { flex: 1; min-width: 0; display: flex; flex-direction: column; }
.doctabs { display: flex; height: 11px; background: #454f61; white-space: nowrap; }
.doctabs button { display: flex; align-items: center; gap: 3px; width: 97px; padding-left: 1px; }
.doctabs svg { width: 8px; height: 8px; }
.doctabs .active { width: 61px; background: var(--dark); font-weight: 700; padding-right: 2px; }
.doctabs .active span { margin-left: auto; }
.doctabs .caret-d { margin-left: auto; padding-right: 3px; line-height: 11px; }
.viewrow { flex: 1; min-height: 0; display: flex; }
.canvas { flex: 1; min-width: 0; position: relative; background: #fff; border-left: 1px solid #8d939c; }
.model { display: block; width: 100%; height: 100%; }
.cubetext { fill: #999; font-size: 5px; }
.navbar {
  position: absolute; right: 0; top: 80px;
  width: 15px;
  display: flex; flex-direction: column; align-items: center; gap: 1px;
  background: #f3f3f3; border: 1px solid #cfcfcf; color: #888;
  line-height: 5px;
}
.navbar svg { display: block; width: 12px; height: 12px; }
.navbar .zoom { border-top: 1px solid #ccc; padding-top: 1px; }
.navbar .tiny { font-size: 5px; align-self: flex-end; height: 6px; }
.vscroll {
  width: 10px;
  display: flex; flex-direction: column; align-items: center; justify-content: space-between;
  background: #323a47;
  font-size: 8px; color: #8b93a0;
}
.vscroll i { width: 2px; height: 7px; background: #5d6675; }
.viewbar { display: flex; align-items: center; height: 10px; background: #3a4352; white-space: nowrap; }
.viewbar .scale { width: 37px; padding-left: 2px; }
.viewbar button { width: 12px; display: grid; place-items: center; flex: none; }
.viewbar svg { width: 8px; height: 8px; }
.blk { width: 8px; height: 6px; background: #a9adb3; }
.hscroll { flex: 1; height: 8px; margin: 0 3px; background: #353d4b; }
.grip { padding: 0 2px; }

.browser {
  width: 155px;
  flex: none;
  display: flex;
  flex-direction: column;
  background: var(--panel);
  border-left: 1px solid var(--line);
  white-space: nowrap;
}
.browser .ptitle { padding: 0; overflow: hidden; }
.search { display: flex; align-items: center; gap: 3px; height: 11px; margin: 3px 2px 1px 4px; padding-left: 4px; background: #2f3744; }
.search svg { width: 8px; height: 8px; flex: none; }
.search input { width: 100%; }
.search input::placeholder { color: #8d95a1; }
.treewrap { flex: 1; min-height: 0; display: flex; }
.tree {
  flex: 1;
  min-width: 0;
  display: grid;
  grid-template-rows: repeat(57, 1fr);
  list-style: none;
  font: 5px/8px "Noto Sans", sans-serif;
  color: #eceef1;
}
.tree li { display: flex; align-items: center; min-height: 0; overflow: hidden; }
.tree button { flex: none; width: 6px; margin-right: 2px; line-height: 8px; font-size: 7px; }
.l1 { padding-left: 1px; }
.l2 { padding-left: 9px; }
.l3 { padding-left: 16px; }
.l4 { padding-left: 24px; }
.l4.leaf { padding-left: 32px; }
.l5 { padding-left: 40px; }
.sel { background: #333b48; }
.ic { width: 8px; height: 6px; background: #c2c6cc; margin-right: 2px; flex: none; }
.ic.blue { width: 7px; background: #8cc7f0; height: 7px; }
.tscroll { width: 5px; background: #353d4a; padding-top: 252px; }
.tscroll i { display: block; width: 2px; height: 105px; margin: 0 auto; background: #5b6474; }

/* status bar */
.status { display: flex; align-items: center; height: 13px; background: #3c4453; border-top: 1px solid #2c3441; white-space: nowrap; }
.status p { width: 750px; flex: 0 1 auto; }
.status svg { width: 9px; height: 9px; }
.ws, .opt, .picks { display: flex; align-items: center; gap: 2px; }
.combo { height: 9px; background: #353d4a; color: #6f7885; line-height: 9px; padding-left: 2px; }
.ws .combo { width: 90px; }
.opt { margin-left: 10px; }
.opt svg:first-child { margin-right: 7px; }
.opt .combo { width: 98px; }
.picks { margin-left: auto; padding-right: 18px; }

/* overlays */
.mark {
  position: absolute;
  font: 22px/24px "Liberation Sans", Arial, sans-serif;
  color: #9fa2a5;
  text-shadow: 0 0 1px #8c8e91, 1px 1px 1px #4a4a4a;
  white-space: nowrap;
  pointer-events: none;
}
.mark.top { left: 694px; top: 57px; color: #b9bbbe; -webkit-text-stroke: 1px #b9bbbe; }
.mark.mid { left: 433px; top: 363px; }
.mark.low { left: 446px; top: 613px; }
.brand { position: absolute; right: 8px; top: 10px; width: 114px; height: 54px; overflow: visible; }
.b1 { font: 900 8px Lato, sans-serif; fill: #444448; }
.b2 { font: 900 18px Roboto, sans-serif; fill: #22c7a8; stroke: #22c7a8; stroke-width: 1px; }
.b3 { font: 300 18px Lato, sans-serif; fill: #3e3e42; }
```
